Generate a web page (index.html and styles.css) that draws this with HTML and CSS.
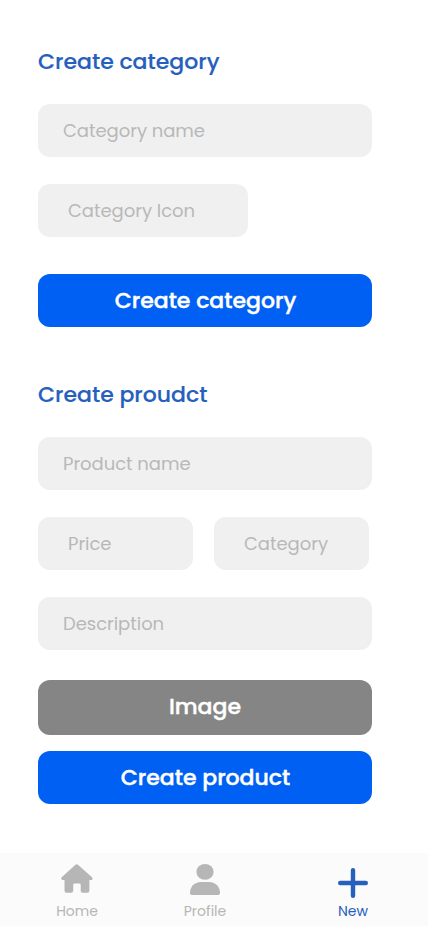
FILE: index.html
```html
<!DOCTYPE html>
<html lang="en"><head><meta charset="utf-8"><title>Create</title><link rel="stylesheet" href="styles.css"></head>
<body>
<main>
<section class="category">
<h2>Create category</h2>
<div class="field">Category name</div>
<div class="field icon-field">Category Icon</div>
<button class="btn">Create category</button>
</section>
<section class="product">
<h2>Create proudct</h2>
<div class="field">Product name</div>
<div class="row"><div class="field half">Price</div><div class="field half">Category</div></div>
<div class="field">Description</div>
<button class="btn image">Image</button>
<button class="btn submit">Create product</button>
</section>
</main>
<nav>
<a class="tab"><svg width="34" height="32" viewBox="0 0 34 32"><path d="M15.200 1.900Q16.700.5 18.200 1.900L32 14.300Q33.300 15.500 31.900 16.900H29.400V27.700Q29.400 29.700 27.400 29.700H22.700Q20.700 29.700 20.700 27.700V21.900Q20.700 20.600 19.400 20.600H14.500Q13.200 20.600 13.200 21.900V27.700Q13.200 29.700 11.200 29.700H6.500Q4.500 29.700 4.500 27.700V16.900H2Q.4 15.500 1.700 14.300Z"/></svg><span>Home</span></a>
<a class="tab"><svg width="34" height="32" viewBox="0 0 34 32"><ellipse cx="17" cy="8.900" rx="8.600" ry="7.900"/><path d="M2 30C2 24 6 19 13 19h8C28 19 32 24 32 30Q32 31.900 30 31.900H4Q2 31.900 2 30Z"/></svg><span>Profile</span></a>
<a class="tab active"><svg width="34" height="32" viewBox="0 0 34 32"><path d="M17 3.200v25.600M4.200 16h25.600"/></svg><span>New</span></a>
</nav>
</body></html>
```
FILE: styles.css
```css
*{box-sizing:border-box}
body{margin:0;width:428px;height:926px;display:flex;flex-direction:column;background:#fff;font-family:Poppins,Inter,sans-serif}
main{flex:1;padding:44px 56px 0 38px}
h2{margin:0 0 25px;height:35px;font-size:22px;line-height:35px;font-weight:500;color:#2560bd;-webkit-text-stroke:.15px currentColor}
.field{height:53px;border-radius:12px;background:#f0f0f0;color:#b8b8b8;font-size:18px;line-height:53px;letter-spacing:-.04px;padding-left:25px;width:334px;margin-bottom:27px}
.icon-field{width:210px;padding-left:30px;margin-bottom:37px}
.btn{display:block;width:334px;height:53px;border:0;border-radius:12px;background:#0060f3;color:#fff;font:500 22px/53px Poppins,Inter,sans-serif;padding:0 0 0 1px;-webkit-text-stroke:.4px currentColor}
.product{margin-top:50px}
.row{display:flex;gap:21px}
.half{width:155px;padding-left:30px}
.image{height:55px;background:#858585;margin-top:30px;padding:0 0 2px}
.submit{margin-top:16px}
nav{height:73px;background:#fbfbfb;display:grid;grid-template-columns:154px 102px 194px;overflow:hidden}
.tab{display:flex;flex-direction:column;align-items:center;padding-top:10px;color:#b6b6b6;font-size:14px;line-height:20px}
.tab span{margin-top:6px}
svg{fill:currentColor}
.active{color:#2560bd;padding-top:14px}
.active span{margin-top:2px}
.active svg{stroke:currentColor;stroke-width:4.4;stroke-linecap:round}
```
